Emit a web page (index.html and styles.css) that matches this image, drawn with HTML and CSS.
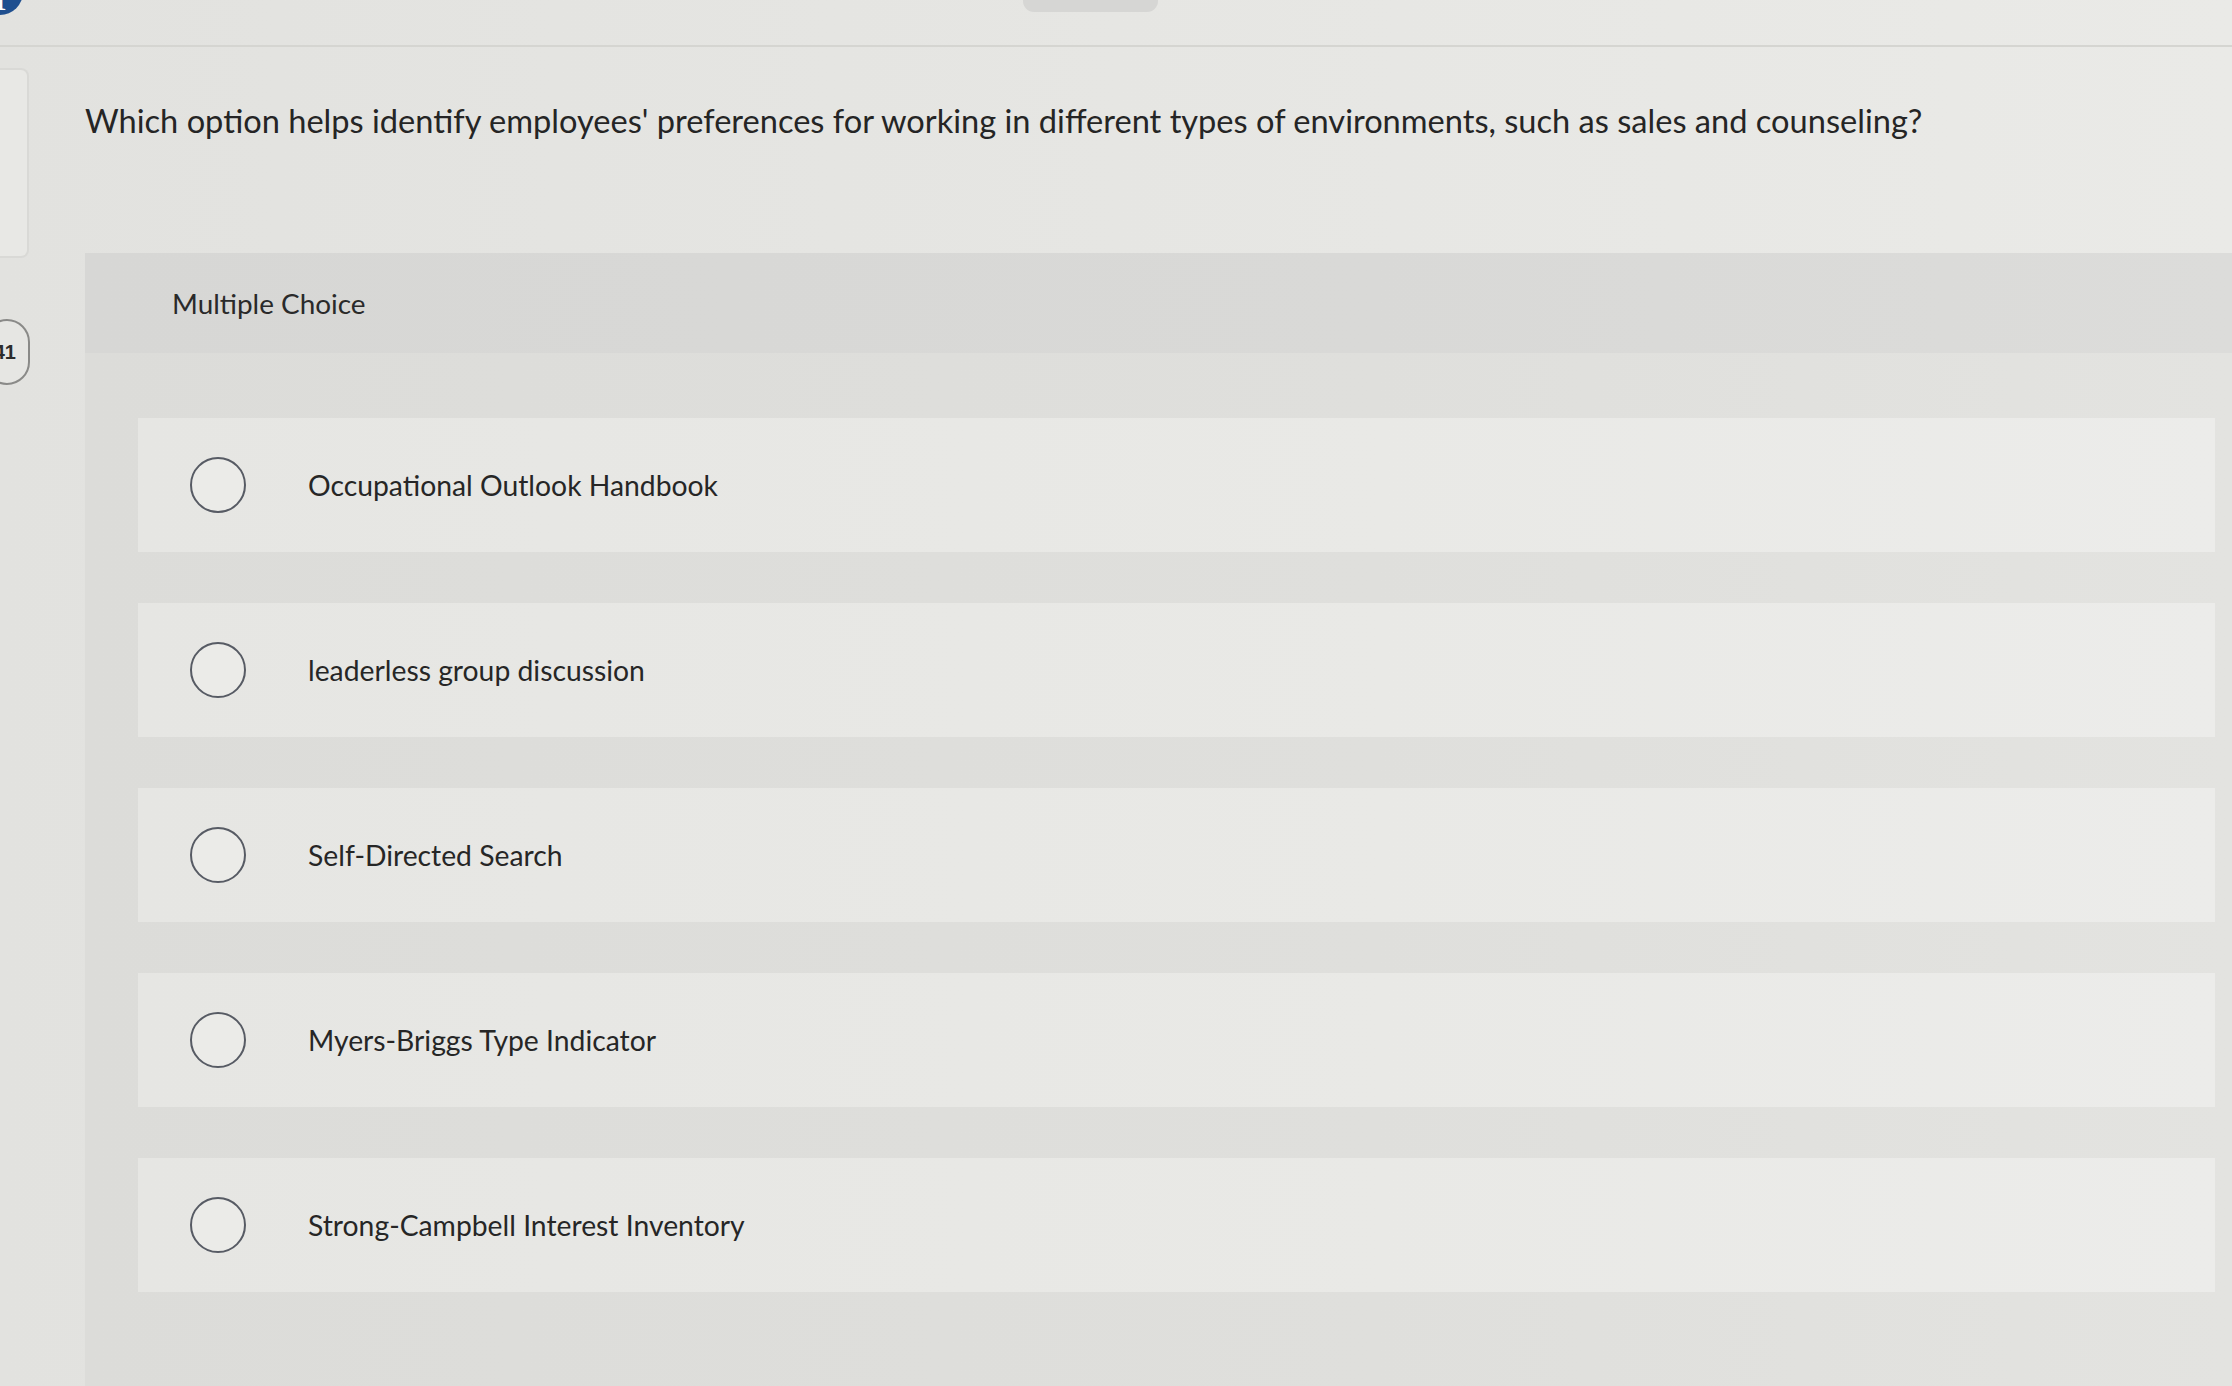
FILE: index.html
```html
<!DOCTYPE html>
<html lang="en">
<head>
<meta charset="utf-8">
<title>Multiple Choice</title>
<link rel="stylesheet" href="styles.css">
</head>
<body>
<header class="topbar">
  <span class="logo-dot">1</span>
  <span class="top-tab"></span>
</header>
<div class="main">
  <aside class="rail">
    <div class="rail-card"></div>
    <div class="rail-badge">41</div>
  </aside>
  <section class="content">
    <p class="question">Which option helps identify employees' preferences for working in different types of environments, such as sales and counseling?</p>
    <div class="panel">
      <div class="panel-head">Multiple Choice</div>
      <div class="options">
        <label class="option"><span class="radio"></span><span class="opt-text">Occupational Outlook Handbook</span></label>
        <label class="option"><span class="radio"></span><span class="opt-text">leaderless group discussion</span></label>
        <label class="option"><span class="radio"></span><span class="opt-text">Self-Directed Search</span></label>
        <label class="option"><span class="radio"></span><span class="opt-text">Myers-Briggs Type Indicator</span></label>
        <label class="option"><span class="radio"></span><span class="opt-text">Strong-Campbell Interest Inventory</span></label>
      </div>
    </div>
  </section>
</div>
</body>
</html>
```
FILE: styles.css
```css
html, body {
  margin: 0;
  padding: 0;
}
body {
  width: 2232px;
  height: 1386px;
  overflow: hidden;
  background: linear-gradient(90deg, #e2e2df 0%, #e6e6e3 50%, #eaeae7 100%);
  font-family: Lato, "Open Sans", "Liberation Sans", sans-serif;
  color: #2a2a2a;
}
.topbar {
  height: 45px;
  border-bottom: 2px solid #d5d5d1;
  display: flex;
  align-items: flex-start;
}
.logo-dot {
  width: 46px;
  height: 46px;
  margin-left: -23px;
  margin-top: -31px;
  border-radius: 50%;
  background: #1f4f8f;
  color: #fff;
  font-family: "Liberation Serif", serif;
  font-weight: bold;
  font-size: 26px;
  display: flex;
  align-items: flex-end;
  justify-content: center;
  line-height: 1;
  box-sizing: border-box;
}
.top-tab {
  width: 135px;
  height: 12px;
  margin-left: 1000px;
  background: #d6d6d4;
  border-radius: 0 0 11px 11px;
}
.main {
  display: flex;
}
.rail {
  width: 85px;
  flex: none;
  display: flex;
  flex-direction: column;
}
.rail-card {
  width: 29px;
  height: 190px;
  margin-top: 21px;
  box-sizing: border-box;
  border: 2px solid #d9d9d6;
  border-left: none;
  border-radius: 0 8px 8px 0;
  background: #e8e8e5;
}
.rail-badge {
  width: 46px;
  height: 66px;
  margin-top: 61px;
  margin-left: -16px;
  box-sizing: border-box;
  border: 2px solid #8a8a88;
  border-radius: 33px;
  background: #e6e6e3;
  display: flex;
  align-items: center;
  justify-content: flex-end;
  padding-right: 12px;
  font-family: "Liberation Sans", Arial, sans-serif;
  font-weight: bold;
  font-size: 20px;
  color: #2c2c2c;
}
.content {
  flex: 1;
}
.question {
  margin: 0;
  padding-top: 54px;
  height: 152px;
  font-size: 32.6px;
  line-height: 40px;
  color: #252525;
  white-space: nowrap;
}
.panel {
  background: linear-gradient(90deg, #dcdcd9 0%, #dfdfdc 60%, #e3e3e0 100%);
  min-height: 1133px;
}
.panel-head {
  height: 100px;
  padding-left: 87px;
  display: flex;
  align-items: center;
  font-size: 27.9px;
  color: #2a2a2a;
  background: linear-gradient(90deg, #d7d7d5 0%, #d9d9d7 60%, #dcdcda 100%);
}
.options {
  padding: 65px 17px 0 53px;
  display: flex;
  flex-direction: column;
  gap: 51px;
}
.option {
  height: 134px;
  display: flex;
  align-items: center;
  padding-left: 52px;
  background: linear-gradient(90deg, #e6e6e3 0%, #e9e9e6 60%, #ececea 100%);
}
.radio {
  width: 56px;
  height: 56px;
  flex: none;
  box-sizing: border-box;
  border: 2.5px solid #575b64;
  border-radius: 50%;
  background: #ebebe8;
}
.opt-text {
  margin-left: 62px;
  font-size: 28.3px;
  color: #262626;
}
```
